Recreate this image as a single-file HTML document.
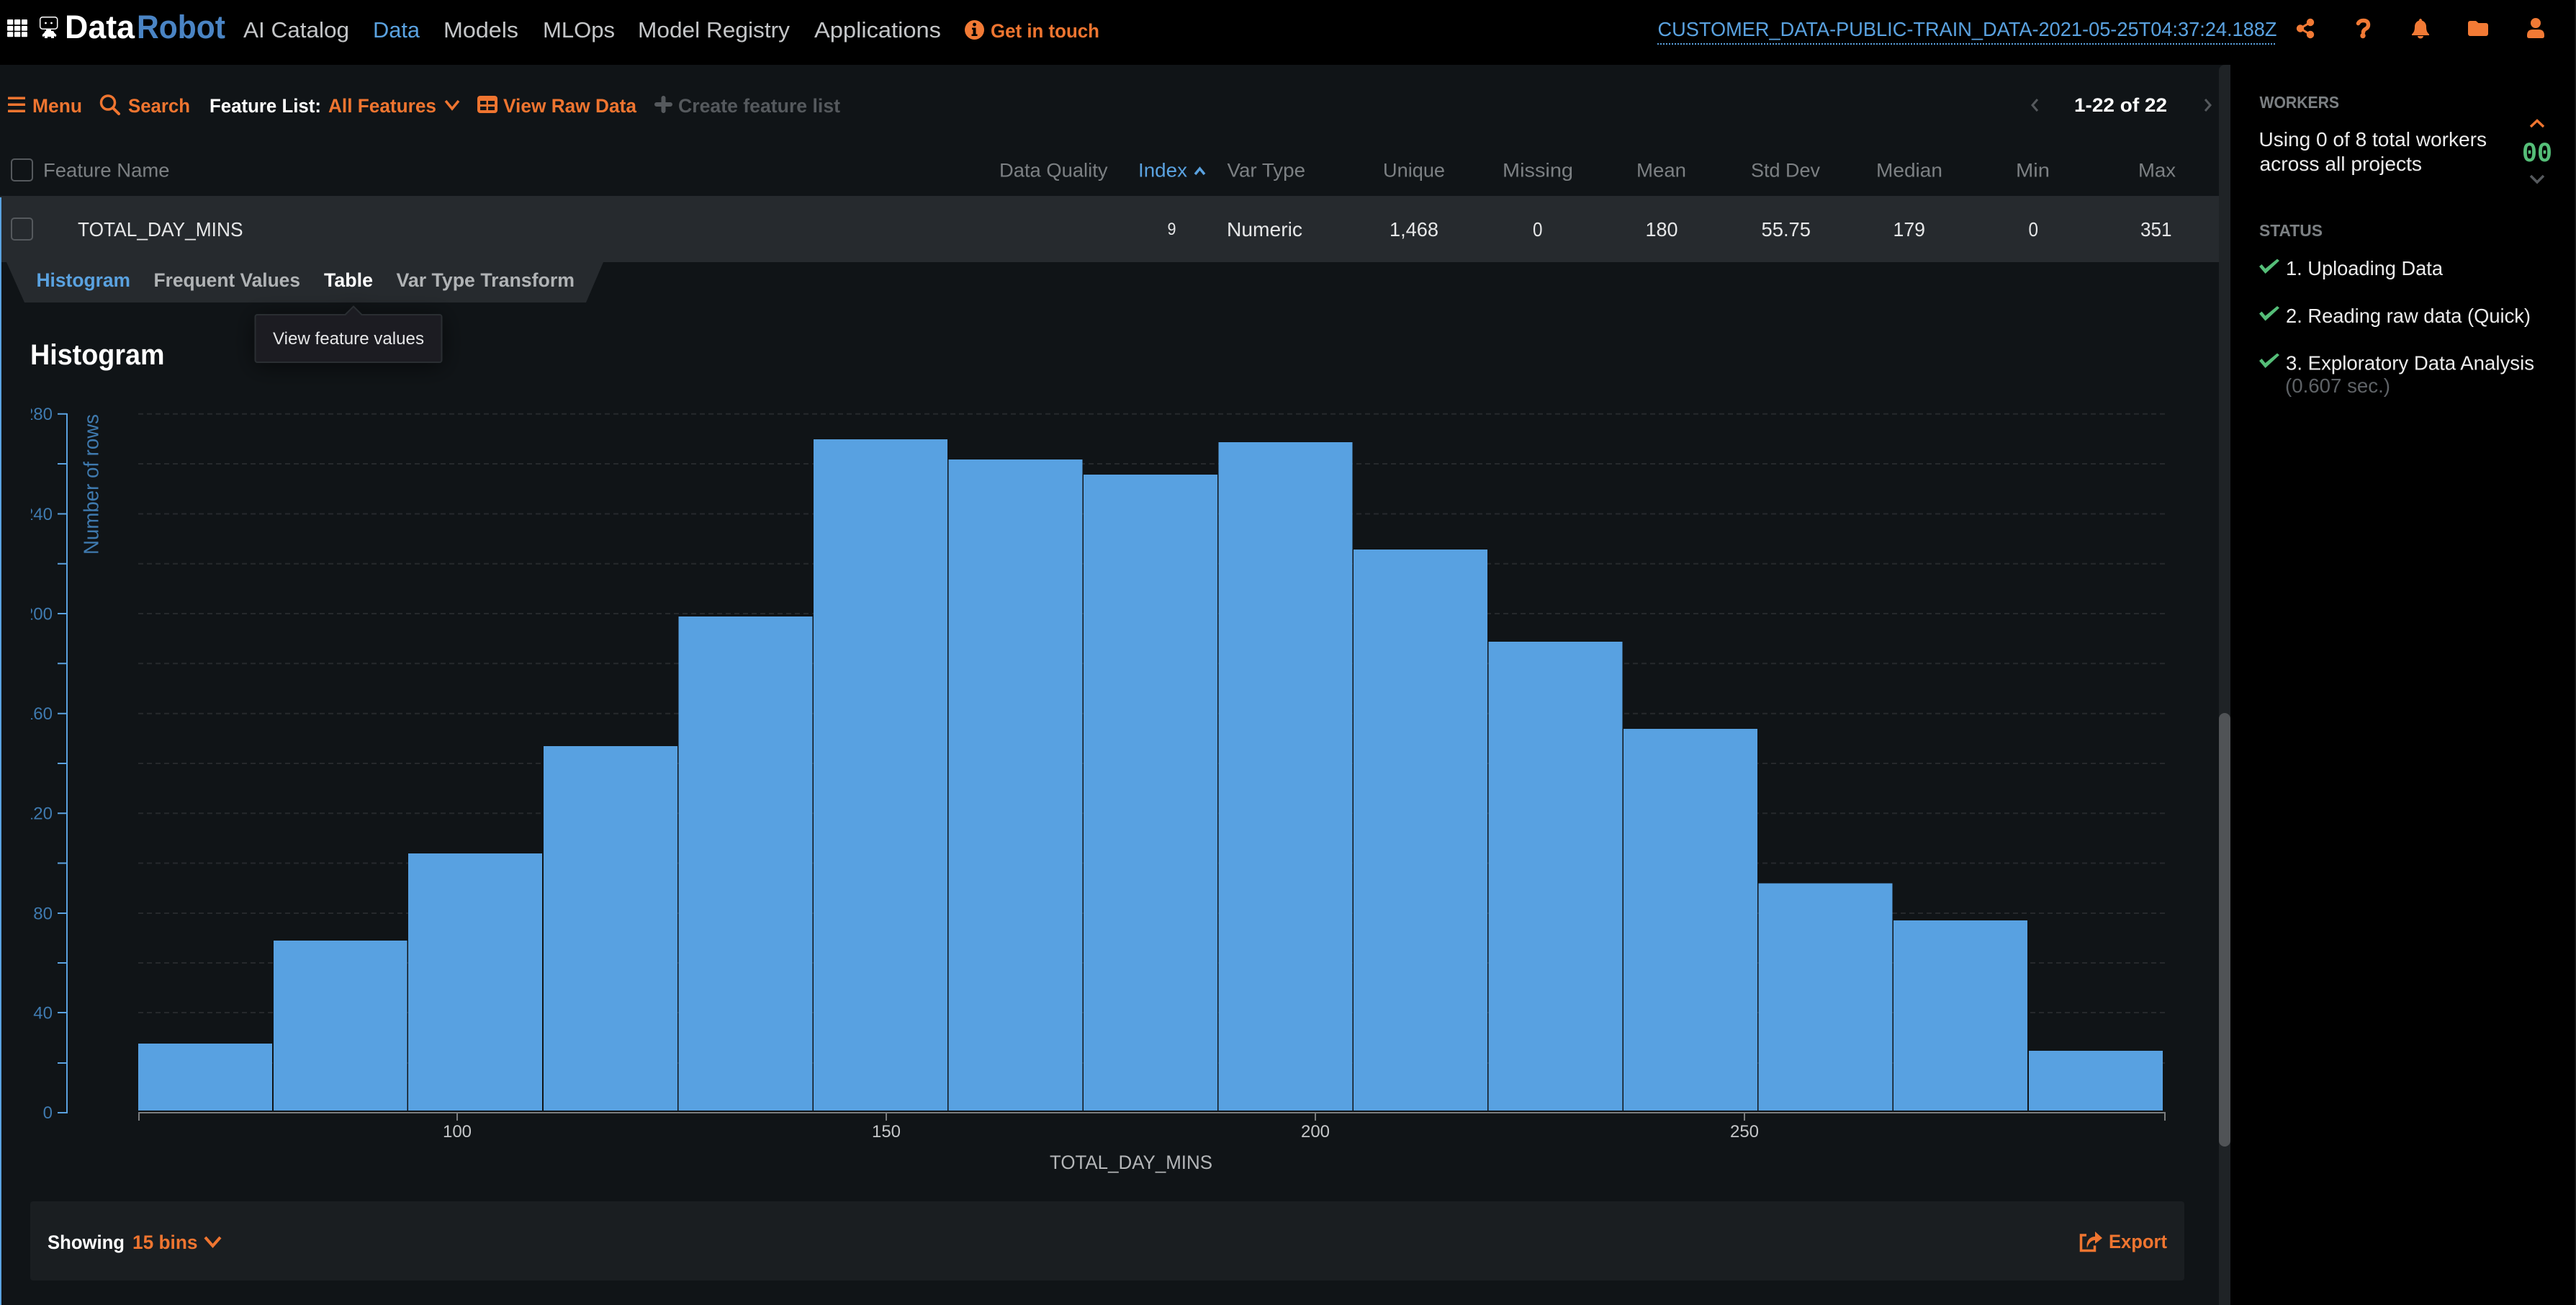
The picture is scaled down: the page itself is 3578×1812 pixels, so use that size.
<!DOCTYPE html>
<html><head><meta charset="utf-8"><title>DataRobot</title>
<style>
html,body{margin:0;padding:0;background:#000;width:3578px;height:1812px;overflow:hidden}
svg{display:block}
text{font-family:"Liberation Sans",sans-serif;white-space:pre}
.m{font-weight:700}
</style></head><body>
<svg xmlns="http://www.w3.org/2000/svg" width="3578" height="1812" viewBox="0 0 3578 1812">
<defs>
<clipPath id="yc"><rect x="43" y="540" width="60" height="1040"/></clipPath>
<filter id="sh" x="-30%" y="-60%" width="160%" height="220%"><feDropShadow dx="0" dy="4" stdDeviation="16" flood-color="#000" flood-opacity=".55"/></filter>
</defs>
<rect width="3578" height="1812" fill="#000"/>
<rect x="0" y="90" width="3098" height="1722" fill="#101417"/>
<rect x="3576.5" y="0" width="1.5" height="1812" fill="#1c1c1c"/>
<!-- scrollbar -->
<path d="M3082 98a8 8 0 0 1 8-8h8v1722h-16z" fill="#1f2326"/>
<rect x="3082" y="990" width="16" height="602" rx="8" fill="#505356"/>

<!-- top bar -->
<g fill="#fff">
<rect x="10" y="27" width="8.3" height="7.3" rx="1"/><rect x="20" y="27" width="8.3" height="7.3" rx="1"/><rect x="30" y="27" width="8" height="7.3" rx="1"/>
<rect x="10" y="36" width="8.3" height="6.7" rx="1"/><rect x="20" y="36" width="8.3" height="6.7" rx="1"/><rect x="30" y="36" width="8" height="6.7" rx="1"/>
<rect x="10" y="44.3" width="8.3" height="7" rx="1"/><rect x="20" y="44.3" width="8.3" height="7" rx="1"/><rect x="30" y="44.3" width="8" height="7" rx="1"/>
<rect x="55.7" y="23.7" width="24" height="16.5" rx="3.5" fill="none" stroke="#fff" stroke-width="1.5"/>
<circle cx="63.5" cy="32" r="1.4"/><circle cx="71.5" cy="32" r="1.4"/>
<rect x="64" y="40" width="7" height="3"/>
<path d="M62 43h11q2 0 2 2l3 3q1 2-1 3l-2-1v3h-4v-2h-5v2h-4v-3l-2 1q-2-1-1-3l3-3q0-2 2-2z"/>
</g>
<text class="m" x="90" y="53" font-size="45" fill="#fff" textLength="97" lengthAdjust="spacingAndGlyphs">Data</text>
<text class="m" x="190" y="53" font-size="45" fill="#4a84c4" textLength="123" lengthAdjust="spacingAndGlyphs">Robot</text>
<g font-size="31" fill="#c4c6c8">
<text x="338" y="52" textLength="147" lengthAdjust="spacingAndGlyphs">AI Catalog</text>
<text x="518" y="52" textLength="65" lengthAdjust="spacingAndGlyphs" fill="#5aa2e0">Data</text>
<text x="616" y="52" textLength="104" lengthAdjust="spacingAndGlyphs">Models</text>
<text x="754" y="52" textLength="100" lengthAdjust="spacingAndGlyphs">MLOps</text>
<text x="886" y="52" textLength="211" lengthAdjust="spacingAndGlyphs">Model Registry</text>
<text x="1131" y="52" textLength="176" lengthAdjust="spacingAndGlyphs">Applications</text>
</g>
<circle cx="1353.5" cy="41.5" r="13.5" fill="#f27a35"/>
<circle cx="1353.5" cy="34" r="2.4" fill="#000"/>
<path d="M1350 38.5h5.5v9h2v2.5h-8v-2.5h2v-6.5h-1.500z" fill="#000"/>
<text class="m" x="1376" y="52" font-size="27" fill="#ef7530" textLength="151" lengthAdjust="spacingAndGlyphs">Get in touch</text>
<text x="2302.5" y="50" font-size="28" fill="#5aa2e0" textLength="860" lengthAdjust="spacingAndGlyphs">CUSTOMER_DATA-PUBLIC-TRAIN_DATA-2021-05-25T04:37:24.188Z</text>
<line x1="2302" y1="61" x2="3162" y2="61" stroke="#5aa2e0" stroke-width="2" stroke-dasharray="2 2"/>
<!-- right icons -->
<g fill="#f27a35">
<circle cx="3209" cy="31" r="5.2"/><circle cx="3195" cy="39.500" r="5.2"/><circle cx="3209" cy="48" r="5.2"/>
<path d="M3209 31L3195 39.500L3209 48" fill="none" stroke="#f27a35" stroke-width="3"/>
<path d="M3275.500 32.500q2-4 7-4q7 0 7 6q0 3.500-3.500 5.500q-3.500 2-3.500 5" fill="none" stroke="#f27a35" stroke-width="5.500" stroke-linecap="round"/>
<circle cx="3282" cy="49.500" r="3.700"/>
<path d="M3360 28.500a2 2.500 0 0 1 4 0C3368 30 3370 33 3370 37C3370 42 3371 45 3374 47.500V49H3350V47.500C3353 45 3354 42 3354 37C3354 33 3356 30 3360 28.500z"/>
<path d="M3358 50h8a4 3.500 0 0 1-8 0z"/>
<path d="M3428 32a3 3 0 0 1 3-3h8l3.500 3h10.500a3 3 0 0 1 3 3v12a3 3 0 0 1-3 3h-22a3 3 0 0 1-3-3z"/>
<circle cx="3522" cy="32" r="7"/>
<path d="M3510 49q0-8 8-8h8q8 0 8 8v1q0 3-3 3h-18q-3 0-3-3z"/>
</g>

<!-- toolbar -->
<g fill="#ef7530">
<rect x="11" y="134.500" width="24" height="3.500" rx=".5"/><rect x="11" y="143.500" width="24" height="3.500" rx=".5"/><rect x="11" y="152.500" width="24" height="3.500" rx=".5"/>
<path d="M663 137a4 4 0 0 1 4-4h20a4 4 0 0 1 4 4v16a4 4 0 0 1-4 4h-20a4 4 0 0 1-4-4z"/>
</g>
<g fill="#101417"><rect x="667" y="140" width="8.500" height="5"/><rect x="678" y="140" width="9" height="5"/><rect x="667" y="148" width="8.500" height="5"/><rect x="678" y="148" width="9" height="5"/></g>
<circle cx="150" cy="142.500" r="9.500" fill="none" stroke="#ef7530" stroke-width="3.500"/>
<line x1="157" y1="150" x2="165" y2="158" stroke="#ef7530" stroke-width="4" stroke-linecap="round"/>
<polyline points="619,140 628,151 637,140" fill="none" stroke="#ef7530" stroke-width="3.500"/>
<path d="M921.500 136v18M912 145h19" stroke="#55595d" stroke-width="6" stroke-linecap="round"/>
<g class="m" font-size="27" fill="#ef7530">
<text class="m" x="45" y="156" textLength="69" lengthAdjust="spacingAndGlyphs">Menu</text>
<text class="m" x="178" y="156" textLength="86" lengthAdjust="spacingAndGlyphs">Search</text>
<text class="m" x="291" y="156" textLength="155" lengthAdjust="spacingAndGlyphs" fill="#fff">Feature List:</text>
<text class="m" x="456" y="156" textLength="150" lengthAdjust="spacingAndGlyphs">All Features</text>
<text class="m" x="699" y="156" textLength="185" lengthAdjust="spacingAndGlyphs">View Raw Data</text>
<text class="m" x="942" y="156" textLength="225" lengthAdjust="spacingAndGlyphs" fill="#55595d">Create feature list</text>
<text class="m" x="2881" y="155" textLength="129" lengthAdjust="spacingAndGlyphs" fill="#fff">1-22 of 22</text>
</g>
<polyline points="2830,138 2823,146 2830,154" fill="none" stroke="#55595d" stroke-width="3"/>
<polyline points="3063,138 3070,146 3063,154" fill="none" stroke="#55595d" stroke-width="3"/>

<!-- table header -->
<rect x="16" y="221" width="29" height="30" rx="4" fill="none" stroke="#55595d" stroke-width="2"/>
<g font-size="27" fill="#7c8083">
<text x="60" y="245.500" textLength="175.500" lengthAdjust="spacingAndGlyphs">Feature Name</text>
<text x="1388" y="245.500" textLength="150.500" lengthAdjust="spacingAndGlyphs">Data Quality</text>
<text x="1581" y="245.500" textLength="68" lengthAdjust="spacingAndGlyphs" fill="#5aa2e0">Index</text>
<text x="1704.500" y="245.500" textLength="108.500" lengthAdjust="spacingAndGlyphs">Var Type</text>
<text x="1921" y="245.500" textLength="86" lengthAdjust="spacingAndGlyphs">Unique</text>
<text x="2087" y="245.500" textLength="98" lengthAdjust="spacingAndGlyphs">Missing</text>
<text x="2273" y="245.500" textLength="69" lengthAdjust="spacingAndGlyphs">Mean</text>
<text x="2432" y="245.500" textLength="96" lengthAdjust="spacingAndGlyphs">Std Dev</text>
<text x="2606" y="245.500" textLength="92" lengthAdjust="spacingAndGlyphs">Median</text>
<text x="2800" y="245.500" textLength="47" lengthAdjust="spacingAndGlyphs">Min</text>
<text x="2970" y="245.500" textLength="52" lengthAdjust="spacingAndGlyphs">Max</text>
</g>
<polyline points="1660,242 1666.500,234 1673,242" fill="none" stroke="#5aa2e0" stroke-width="3.500"/>

<!-- row -->
<rect x="0" y="272" width="3082" height="92" fill="#262a2e"/>
<rect x="16" y="303" width="29" height="30" rx="4" fill="none" stroke="#55595d" stroke-width="2"/>
<g font-size="28" fill="#e6e7e8">
<text x="108" y="328" textLength="229.500" lengthAdjust="spacingAndGlyphs">TOTAL_DAY_MINS</text>
<text x="1621.500" y="326" font-size="24" textLength="12" lengthAdjust="spacingAndGlyphs">9</text>
<text x="1704" y="328" textLength="105" lengthAdjust="spacingAndGlyphs">Numeric</text>
<text x="1930" y="328" textLength="68" lengthAdjust="spacingAndGlyphs">1,468</text>
<text x="2129" y="328" textLength="13.500" lengthAdjust="spacingAndGlyphs">0</text>
<text x="2285.500" y="328" textLength="45" lengthAdjust="spacingAndGlyphs">180</text>
<text x="2446.500" y="328" textLength="68.500" lengthAdjust="spacingAndGlyphs">55.75</text>
<text x="2629.500" y="328" textLength="44.500" lengthAdjust="spacingAndGlyphs">179</text>
<text x="2817.500" y="328" textLength="13.500" lengthAdjust="spacingAndGlyphs">0</text>
<text x="2973" y="328" textLength="43.500" lengthAdjust="spacingAndGlyphs">351</text>
</g>

<!-- tabs -->
<polygon points="9,364 838,364 814,420 34,420" fill="#262a2e"/>
<g font-size="27">
<text class="m" x="50.500" y="398" textLength="130.500" lengthAdjust="spacingAndGlyphs" fill="#5aa2e0">Histogram</text>
<text class="m" x="213.500" y="398" textLength="203.500" lengthAdjust="spacingAndGlyphs" fill="#b0b3b5">Frequent Values</text>
<text class="m" x="450" y="398" textLength="68" lengthAdjust="spacingAndGlyphs" fill="#fff">Table</text>
<text class="m" x="550.500" y="398" textLength="247.500" lengthAdjust="spacingAndGlyphs" fill="#b0b3b5">Var Type Transform</text>
</g>

<text class="m" x="42" y="506" font-size="40" fill="#fff" textLength="186.500" lengthAdjust="spacingAndGlyphs">Histogram</text>

<!-- grid -->
<g stroke="#26292c" stroke-width="2" stroke-dasharray="7 5">
<line x1="192" y1="574.700" x2="3007" y2="574.700"/><line x1="192" y1="644" x2="3007" y2="644"/><line x1="192" y1="713.500" x2="3007" y2="713.500"/><line x1="192" y1="782.700" x2="3007" y2="782.700"/><line x1="192" y1="852" x2="3007" y2="852"/><line x1="192" y1="921.300" x2="3007" y2="921.300"/><line x1="192" y1="990.700" x2="3007" y2="990.700"/><line x1="192" y1="1060" x2="3007" y2="1060"/><line x1="192" y1="1129.300" x2="3007" y2="1129.300"/><line x1="192" y1="1198.500" x2="3007" y2="1198.500"/><line x1="192" y1="1268" x2="3007" y2="1268"/><line x1="192" y1="1337" x2="3007" y2="1337"/><line x1="192" y1="1406" x2="3007" y2="1406"/><line x1="192" y1="1476" x2="3007" y2="1476"/>
</g>
<!-- bars -->
<g fill="#58a1e1">
<rect x="192" y="1449" width="186" height="93"/>
<rect x="380" y="1306" width="185.500" height="236"/>
<rect x="567" y="1185" width="186" height="357"/>
<rect x="755" y="1036" width="186" height="506"/>
<rect x="942.500" y="856" width="186" height="686"/>
<rect x="1130" y="610" width="186" height="932"/>
<rect x="1317.500" y="638" width="186" height="904"/>
<rect x="1505" y="659" width="186" height="883"/>
<rect x="1692.500" y="614" width="186" height="928"/>
<rect x="1880" y="763" width="186" height="779"/>
<rect x="2067.500" y="891" width="186" height="651"/>
<rect x="2255" y="1012" width="186" height="530"/>
<rect x="2442.500" y="1226.500" width="186" height="315.500"/>
<rect x="2630" y="1278" width="186" height="264"/>
<rect x="2818" y="1459" width="186" height="83"/>
</g>
<!-- y axis -->
<g stroke="#5aa2e0" stroke-width="2" fill="none">
<line x1="93" y1="574" x2="93" y2="1546"/>
<path d="M80 574.700h13M80 644h13M80 713.500h13M80 782.700h13M80 852h13M80 921.300h13M80 990.700h13M80 1060h13M80 1129.300h13M80 1198.500h13M80 1268h13M80 1337h13M80 1406h13M80 1476h13M80 1545h13"/>
</g>
<g clip-path="url(#yc)" font-size="24" fill="#3f7aaf" text-anchor="end">
<text x="73" y="583">280</text><text x="73" y="722">240</text><text x="73" y="860.500">200</text><text x="73" y="999">160</text><text x="73" y="1137.500">120</text><text x="73" y="1276.500">80</text><text x="73" y="1414.500">40</text><text x="73" y="1553">0</text>
</g>
<text transform="translate(136.500,770) rotate(-90)" x="0" y="0" font-size="29" fill="#3f7aaf" textLength="195" lengthAdjust="spacingAndGlyphs">Number of rows</text>
<!-- x axis -->
<g stroke="#7a7c7e" stroke-width="2" fill="none">
<path d="M193 1556v-11H3007v11"/>
<path d="M635 1545v11M1231 1545v11M1827 1545v11M2423 1545v11"/>
</g>
<g font-size="24" fill="#c4c6c8" text-anchor="middle">
<text x="635" y="1579">100</text><text x="1231" y="1579">150</text><text x="1827" y="1579">200</text><text x="2423" y="1579">250</text>
</g>
<text x="1458" y="1623" font-size="27" fill="#b4b6b8" textLength="226" lengthAdjust="spacingAndGlyphs">TOTAL_DAY_MINS</text>

<!-- tooltip -->
<path d="M354.500 440a3 3 0 0 1 3-3h122l11.500-11.500l11.500 11.500h108a3 3 0 0 1 3 3v60a3 3 0 0 1-3 3h-253a3 3 0 0 1-3-3z" fill="#1a1e21" stroke="#2a2e31" stroke-width="2" filter="url(#sh)"/>
<text x="379" y="478" font-size="24" fill="#e6e7e8" textLength="210" lengthAdjust="spacingAndGlyphs">View feature values</text>

<!-- footer -->
<rect x="42" y="1668" width="2992" height="110" rx="4" fill="#1a1e21"/>
<text class="m" x="66" y="1734" font-size="27" fill="#fff" textLength="107" lengthAdjust="spacingAndGlyphs">Showing</text>
<text class="m" x="184" y="1734" font-size="27" fill="#ef7530" textLength="90.500" lengthAdjust="spacingAndGlyphs">15 bins</text>
<polyline points="285,1718 295.500,1730 306,1718" fill="none" stroke="#ef7530" stroke-width="4"/>
<path d="M2898 1715h-7.500v21.500h19v-7" fill="none" stroke="#ef7530" stroke-width="3.500"/>
<path d="M2899 1733C2897 1723 2903 1717 2910 1717V1710L2920 1719L2910 1727V1722C2905 1722 2901 1726 2899 1733Z" fill="#ef7530"/>
<text class="m" x="2929" y="1733" font-size="27" fill="#ef7530" textLength="81" lengthAdjust="spacingAndGlyphs">Export</text>

<!-- blue left line -->
<rect x="0" y="274" width="2" height="1538" fill="#5aa2e0"/>

<!-- right panel -->
<text class="m" x="3138.500" y="150" font-size="23.500" fill="#7c8083" textLength="110.500" lengthAdjust="spacingAndGlyphs">WORKERS</text>
<text x="3137.500" y="203" font-size="28" fill="#ececec" textLength="316.500" lengthAdjust="spacingAndGlyphs">Using 0 of 8 total workers</text>
<text x="3138.500" y="237" font-size="28" fill="#ececec" textLength="225.500" lengthAdjust="spacingAndGlyphs">across all projects</text>
<polyline points="3515,176 3524,167.500 3533,176" fill="none" stroke="#ef7530" stroke-width="3.500"/>
<text x="3503" y="224" font-size="39" font-weight="700" style="font-family:'Liberation Mono',monospace" fill="#55be78" textLength="42" lengthAdjust="spacingAndGlyphs">00</text>
<polyline points="3515,244 3524,253 3533,244" fill="none" stroke="#55595d" stroke-width="3.500"/>
<text class="m" x="3138" y="328" font-size="23.500" fill="#7c8083" textLength="88" lengthAdjust="spacingAndGlyphs">STATUS</text>
<g fill="#55be78">
<path d="M3138 370l3.500-3 5 6 16.500-13.500 3 2.500-19.500 18z"/>
<path d="M3138 435.500l3.500-3 5 6 16.500-13.500 3 2.500-19.500 18z"/>
<path d="M3138 501l3.500-3 5 6 16.500-13.500 3 2.500-19.500 18z"/>
</g>
<g font-size="28" fill="#ececec">
<text x="3175" y="382" textLength="218" lengthAdjust="spacingAndGlyphs">1. Uploading Data</text>
<text x="3175" y="448" textLength="340" lengthAdjust="spacingAndGlyphs">2. Reading raw data (Quick)</text>
<text x="3175" y="513.500" textLength="345" lengthAdjust="spacingAndGlyphs">3. Exploratory Data Analysis</text>
<text x="3174" y="545" textLength="146" lengthAdjust="spacingAndGlyphs" fill="#5e6266">(0.607 sec.)</text>
</g>
</svg>
</body></html>
